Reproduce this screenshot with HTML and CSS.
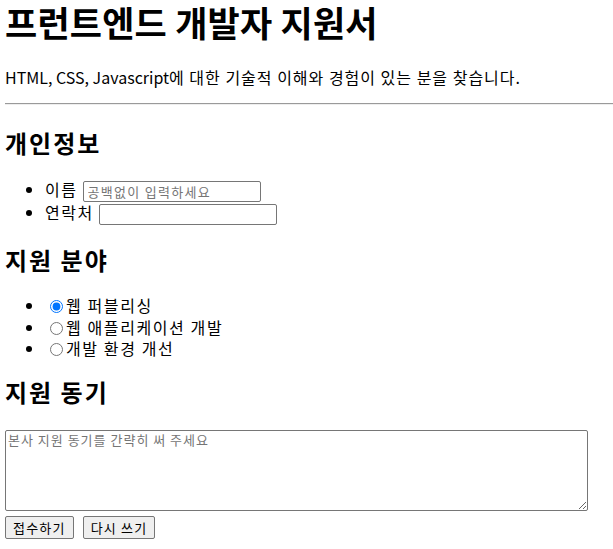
FILE: index.html
```html
<!DOCTYPE html>
<html>
<head>
  <meta charset="utf-8">
  <title>프런트엔드 개발자 지원서</title>
  <link rel="stylesheet" href="styles.css">
</head>
<body>
  <h1>프런트엔드 개발자 지원서</h1>
  <p class="intro"><span class="latin">HTML, CSS, Javascript</span>에 대한 기술적 이해와 경험이 있는 분을 찾습니다.</p>
  <hr>

  <form>
    <h2>개인정보</h2>
    <ul class="fields">
      <li>이름 <input type="text" class="text-input" placeholder="공백없이 입력하세요"></li>
      <li>연락처 <input type="tel" class="text-input"></li>
    </ul>

    <h2>지원 분야</h2>
    <ul class="options">
      <li><label><input type="radio" name="field" value="publishing" checked>웹 퍼블리싱</label></li>
      <li><label><input type="radio" name="field" value="webapp">웹 애플리케이션 개발</label></li>
      <li><label><input type="radio" name="field" value="devenv">개발 환경 개선</label></li>
    </ul>

    <h2>지원 동기</h2>
    <textarea class="motive" placeholder="본사 지원 동기를 간략히 써 주세요"></textarea>
    <div class="actions">
      <button type="submit">접수하기</button>
      <button type="reset">다시 쓰기</button>
    </div>
  </form>
</body>
</html>
```

FILE: styles.css
```css
body {
  margin: 0;
  padding: 0 5px;
  font-family: "Noto Sans CJK KR", "Noto Sans", sans-serif;
  font-size: 16px;
  color: #000;
  background: #fff;
  overflow: hidden;
}
h1 {
  font-size: 35px;
  line-height: 44px;
  letter-spacing: 0.2px;
  margin: 0;
}
h2 {
  font-size: 24px;
  line-height: 30px;
  letter-spacing: 2px;
  margin: 0;
}
.intro {
  line-height: 22px;
  letter-spacing: 1px;
  margin: 22px 0 0;
}
.intro .latin {
  letter-spacing: 0;
}
hr {
  margin: 15px -5px 0 0;
  border: none;
  border-top: 1px solid #9a9a9a;
  border-bottom: 1px solid #eeeeee;
}
form h2:first-child {
  margin-top: 23px;
}
.fields {
  margin: 20px 0 21px;
  padding-left: 40px;
}
.fields li {
  line-height: 23px;
  height: 23px;
  letter-spacing: 1.5px;
}
.text-input {
  width: 178px;
  height: 21px;
  box-sizing: border-box;
  border: 1px solid #767676;
  border-radius: 2px;
  padding: 1px 4px;
  font-family: inherit;
  font-size: 13px;
  letter-spacing: 1.3px;
  vertical-align: middle;
}
.text-input::placeholder {
  color: #757575;
}
.options {
  margin: 20px 0 17px;
  padding-left: 40px;
}
.options li {
  line-height: 21.5px;
  height: 21.5px;
  letter-spacing: 1.6px;
}
.options input {
  width: 13px;
  height: 13px;
  margin: 0 3px 0 5px;
  vertical-align: -1px;
}
.motive {
  display: block;
  box-sizing: border-box;
  width: 583px;
  height: 81px;
  margin-top: 23px;
  border: 1px solid #767676;
  border-radius: 2px;
  padding: 0 2px;
  font-family: inherit;
  font-size: 13px;
  line-height: 17px;
  letter-spacing: 1px;
  resize: both;
}
.motive::placeholder {
  color: #757575;
}
.actions {
  display: flex;
  gap: 9px;
  margin-top: 5px;
}
.actions button {
  height: 23px;
  padding: 0 7px;
  font-family: inherit;
  font-size: 13px;
  letter-spacing: 1.2px;
  background: #efefef;
  border: 1px solid #767676;
  border-radius: 2px;
  color: #000;
}
```
